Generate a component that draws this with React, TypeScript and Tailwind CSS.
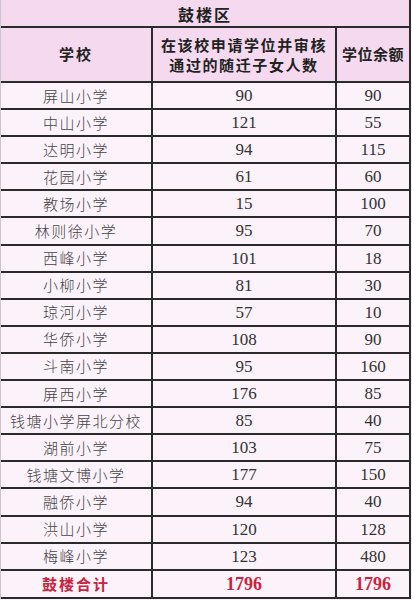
const ROWS: [string, number, number][] = [
  ["屏山小学", 90, 90],
  ["中山小学", 121, 55],
  ["达明小学", 94, 115],
  ["花园小学", 61, 60],
  ["教场小学", 15, 100],
  ["林则徐小学", 95, 70],
  ["西峰小学", 101, 18],
  ["小柳小学", 81, 30],
  ["琼河小学", 57, 10],
  ["华侨小学", 108, 90],
  ["斗南小学", 95, 160],
  ["屏西小学", 176, 85],
  ["钱塘小学屏北分校", 85, 40],
  ["湖前小学", 103, 75],
  ["钱塘文博小学", 177, 150],
  ["融侨小学", 94, 40],
  ["洪山小学", 120, 128],
  ["梅峰小学", 123, 480],
];

const cjk = "font-['Noto_Sans_CJK_SC',sans-serif]";
const num = "font-['Liberation_Serif','Noto_Sans_CJK_SC',serif]";
const cell = "flex items-center justify-center border-r-2 border-[#2b2b2b]";

export default function App() {
  return (
    <div className="w-[412px] h-[600px] overflow-hidden bg-[#fbf2fa]">
      <div className="w-[411px] border-l border-l-[#cfc3cc]">
        <div
          className={`${cjk} flex h-[28px] items-center justify-center border-b-2 border-r-2 border-[#2b2b2b] bg-[#f4d9ef] pt-[1px] text-[16px] font-bold tracking-[2px] text-[#222]`}
        >
          鼓楼区
        </div>
        <div className="grid h-[55px] grid-cols-[152px_184px_1fr] border-b-2 border-[#2b2b2b] bg-[#f4d9ef] text-[#222]">
          <div className={`${cell} ${cjk} text-[15px] font-bold tracking-[2px]`}>学校</div>
          <div className={`${cell} ${cjk} text-center text-[15px] font-bold leading-[20px] tracking-[1.6px]`}>
            在该校申请学位并审核
            <br />
            通过的随迁子女人数
          </div>
          <div className={`${cell} ${cjk} text-[15px] font-bold tracking-[0.5px]`}>学位余额</div>
        </div>
        {ROWS.map(([name, a, b]) => (
          <div
            key={name}
            className="grid h-[27.1px] grid-cols-[152px_184px_1fr] border-b-2 border-[#2b2b2b]"
          >
            <div className={`${cell} ${cjk} text-[15px] font-light tracking-[1.5px] text-[#444]`}>{name}</div>
            <div className={`${cell} ${num} text-[17px] text-[#333]`}>{a}</div>
            <div className={`${cell} ${num} text-[17px] text-[#333]`}>{b}</div>
          </div>
        ))}
        <div className="grid h-[28px] grid-cols-[152px_184px_1fr] border-b-2 border-[#2b2b2b]">
          <div className={`${cell} ${cjk} text-[15px] font-bold tracking-[2px] text-[#c8243c]`}>鼓楼合计</div>
          <div className={`${cell} ${num} text-[18px] font-bold text-[#c8243c]`}>1796</div>
          <div className={`${cell} ${num} text-[18px] font-bold text-[#c8243c]`}>1796</div>
        </div>
      </div>
    </div>
  );
}
